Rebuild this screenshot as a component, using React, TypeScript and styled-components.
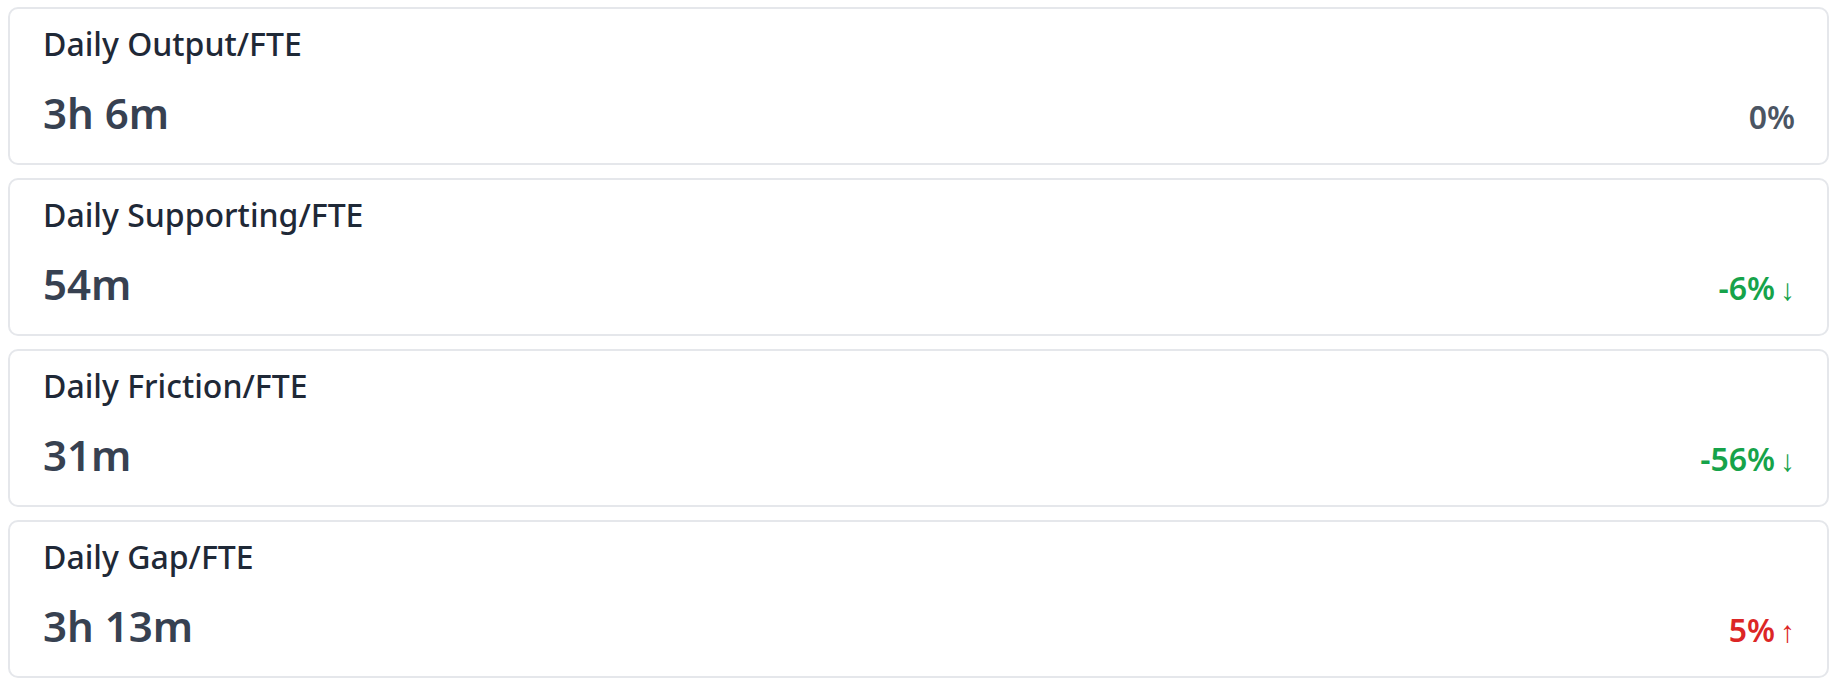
import React from "react";
import styled, { createGlobalStyle } from "styled-components";

type Trend = "flat" | "down" | "up";

interface Metric {
  label: string;
  value: string;
  change: string;
  trend: Trend;
}

const metrics: Metric[] = [
  { label: "Daily Output/FTE", value: "3h 6m", change: "0%", trend: "flat" },
  { label: "Daily Supporting/FTE", value: "54m", change: "-6%", trend: "down" },
  { label: "Daily Friction/FTE", value: "31m", change: "-56%", trend: "down" },
  { label: "Daily Gap/FTE", value: "3h 13m", change: "5%", trend: "up" },
];

const trendColors: Record<Trend, string> = {
  flat: "#4b5563",
  down: "#16a34a",
  up: "#dc2626",
};

const GlobalStyle = createGlobalStyle`
  html, body {
    margin: 0;
    padding: 0;
    background: #ffffff;
  }
  body {
    font-family: "Noto Sans", "Open Sans", sans-serif;
  }
`;

const App: React.FC = () => (
  <>
    <GlobalStyle />
    <List>
      {metrics.map((m) => (
        <Card key={m.label}>
          <Label>{m.label}</Label>
          <Row>
            <Value>{m.value}</Value>
            <Change trend={m.trend}>
              {m.change}
              {m.trend !== "flat" && (
                <Arrow>{m.trend === "down" ? "↓" : "↑"}</Arrow>
              )}
            </Change>
          </Row>
        </Card>
      ))}
    </List>
  </>
);

const List = styled.div`
  display: flex;
  flex-direction: column;
  gap: 13px;
  padding: 7px 2px 0 8px;
`;

const Card = styled.div`
  box-sizing: border-box;
  height: 158px;
  border: 2px solid #e5e7eb;
  border-radius: 10px;
  background: #fff;
  padding: 13px 32px 0 33px;
  display: flex;
  flex-direction: column;
`;

const Label = styled.div`
  font-size: 32px;
  font-weight: 500;
  color: #1f2937;
  line-height: 44px;
`;

const Row = styled.div`
  display: flex;
  align-items: baseline;
  justify-content: space-between;
  margin-top: 23px;
`;

const Value = styled.div`
  font-size: 42px;
  font-weight: 600;
  color: #374151;
  line-height: 48px;
`;

const Change = styled.div<{ trend: Trend }>`
  font-size: 32px;
  font-weight: 600;
  color: ${({ trend }) => trendColors[trend]};
  display: flex;
  align-items: baseline;
`;

const Arrow = styled.span`
  font-size: 30px;
  font-weight: 400;
  margin-left: 5px;
`;

export default App;
